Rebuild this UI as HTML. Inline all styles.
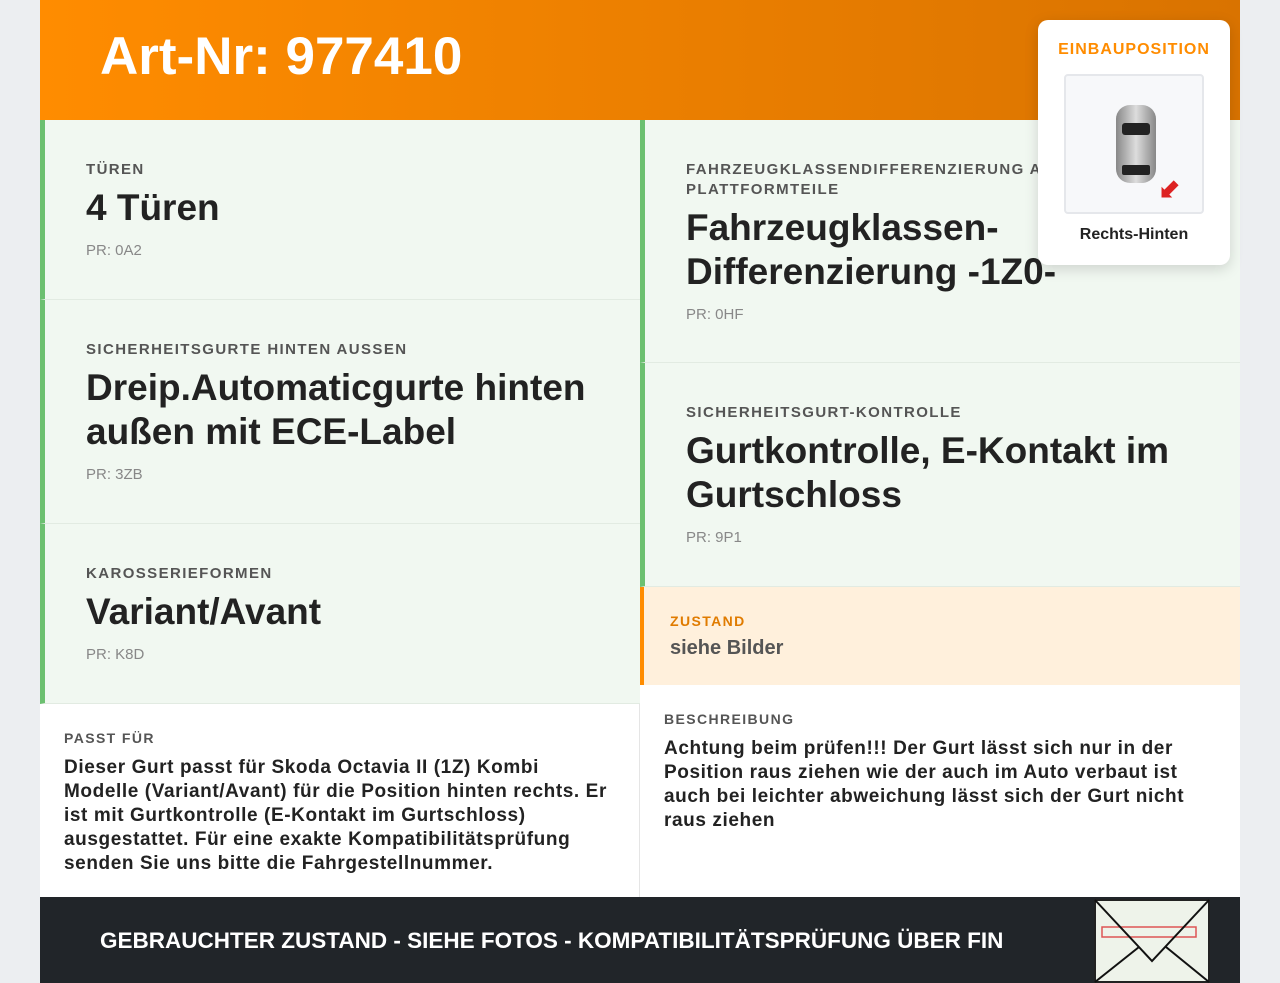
<!DOCTYPE html>
<html><head><meta charset="utf-8"><style>
*{box-sizing:border-box;margin:0;padding:0}
body{width:1280px;height:983px;background:#eceef1;font-family:"Liberation Sans",sans-serif;overflow:hidden;position:relative}
.wrap{position:absolute;left:40px;top:0;width:1200px;height:983px;background:#fff}
.hdr{position:absolute;left:0;top:0;width:1200px;height:120px;background:linear-gradient(90deg,#ff8c00,#d97300)}
.hdr h1{position:absolute;left:60px;top:26px;color:#fff;font-size:53px;font-weight:bold}
.cell{position:absolute;background:#f1f8f1;border-left:5px solid #6cc070;border-bottom:1px solid #e2ebe2;padding-left:41px}
.lab{font-size:15px;letter-spacing:1.4px;color:#555;text-transform:uppercase;font-weight:bold;line-height:20px}
.val{font-size:37px;font-weight:bold;color:#222;line-height:44px;margin-top:6px}
.pr{font-size:15px;color:#888;margin-top:12px}
.txt{position:absolute;padding:0 24px}
.txt .lab{font-size:14px}
.txt p{font-size:19px;color:#222;line-height:24px;margin-top:8px;font-weight:bold;white-space:nowrap;letter-spacing:0.6px}
.foot{position:absolute;left:0;top:897px;width:1200px;height:86px;background:#212529}
.foot span{position:absolute;left:60px;top:31px;color:#fff;font-weight:bold;font-size:22.5px}
.card{position:absolute;left:1038px;top:20px;width:192px;height:245px;background:#fff;border-radius:10px;box-shadow:0 4px 14px rgba(0,0,0,.15);text-align:center}
</style></head><body>
<div class="wrap">
<div class="hdr"><h1>Art-Nr: 977410</h1></div>
<div class="cell" style="left:0;top:120px;width:600px;height:180px;padding-top:40px"><div class="lab">Türen</div><div class="val">4 Türen</div><div class="pr">PR: 0A2</div></div>
<div class="cell" style="left:0;top:300px;width:600px;height:224px;padding-top:40px"><div class="lab">Sicherheitsgurte hinten aussen</div><div class="val">Dreip.Automaticgurte hinten außen mit ECE-Label</div><div class="pr">PR: 3ZB</div></div>
<div class="cell" style="left:0;top:524px;width:600px;height:180px;padding-top:40px"><div class="lab">Karosserieformen</div><div class="val">Variant/Avant</div><div class="pr">PR: K8D</div></div>
<div class="cell" style="left:600px;top:120px;width:600px;height:243px;padding-top:40px;overflow:hidden"><div class="lab" style="white-space:nowrap">Fahrzeugklassendifferenzierung a<br>Plattformteile</div><div class="val">Fahrzeugklassen-<br>Differenzierung -1Z0-</div><div class="pr">PR: 0HF</div></div>
<div class="cell" style="left:600px;top:363px;width:600px;height:224px;padding-top:40px"><div class="lab">Sicherheitsgurt-Kontrolle</div><div class="val">Gurtkontrolle, E-Kontakt im Gurtschloss</div><div class="pr">PR: 9P1</div></div>
<div style="position:absolute;left:600px;top:587px;width:600px;height:98px;background:#fff0dc;border-left:4px solid #ff8c00;padding:24px 26px"><div class="lab" style="color:#e07b00;font-size:14px">Zustand</div><div style="font-size:20px;font-weight:bold;color:#555;margin-top:6px">siehe Bilder</div></div>
<div class="txt" style="left:0;top:704px;width:600px;height:193px;padding-top:24px;border-right:1px solid #e5e5e5"><div class="lab">Passt für</div><p>Dieser Gurt passt für Skoda Octavia II (1Z) Kombi<br>Modelle (Variant/Avant) für die Position hinten rechts. Er<br>ist mit Gurtkontrolle (E-Kontakt im Gurtschloss)<br>ausgestattet. Für eine exakte Kompatibilitätsprüfung<br>senden Sie uns bitte die Fahrgestellnummer.</p></div>
<div class="txt" style="left:600px;top:685px;width:600px;height:212px;padding-top:24px"><div class="lab">Beschreibung</div><p>Achtung beim prüfen!!! Der Gurt lässt sich nur in der<br>Position raus ziehen wie der auch im Auto verbaut ist<br>auch bei leichter abweichung lässt sich der Gurt nicht<br>raus ziehen</p></div>
<div class="foot"><span>GEBRAUCHTER ZUSTAND - SIEHE FOTOS - KOMPATIBILITÄTSPRÜFUNG ÜBER FIN</span>
<svg style="position:absolute;left:1054px;top:2px" width="116" height="84" viewBox="0 0 116 84"><rect x="1" y="1" width="114" height="82" fill="#eef3ea" stroke="#222" stroke-width="2"/><rect x="8" y="28" width="94" height="10" fill="none" stroke="#d55" stroke-width="1.5"/><path d="M1 1 L58 62 L115 1 M1 83 L45 48 M115 83 L72 48" fill="none" stroke="#111" stroke-width="2"/></svg></div>
</div>
<div class="card"><div style="color:#ff8c00;font-weight:bold;font-size:16px;letter-spacing:1px;margin-top:21px">EINBAUPOSITION</div>
<div style="margin:15px auto 0;width:140px;height:140px;background:#f7f8fa;border:2px solid #e5e7eb;border-radius:4px;position:relative">
<div style="position:absolute;left:50px;top:29px;width:40px;height:78px;border-radius:14px;background:linear-gradient(90deg,#888,#ddd,#888)"><div style="position:absolute;left:6px;top:18px;width:28px;height:12px;background:#222;border-radius:3px"></div><div style="position:absolute;left:6px;top:60px;width:28px;height:10px;background:#222;border-radius:2px"></div></div>
<div style="position:absolute;left:92px;top:98px;color:#d22;font-size:26px;font-weight:bold;transform:rotate(-45deg)">⬅</div></div>
<div style="font-size:16px;font-weight:bold;color:#222;margin-top:12px">Rechts-Hinten</div></div>
</body></html>
